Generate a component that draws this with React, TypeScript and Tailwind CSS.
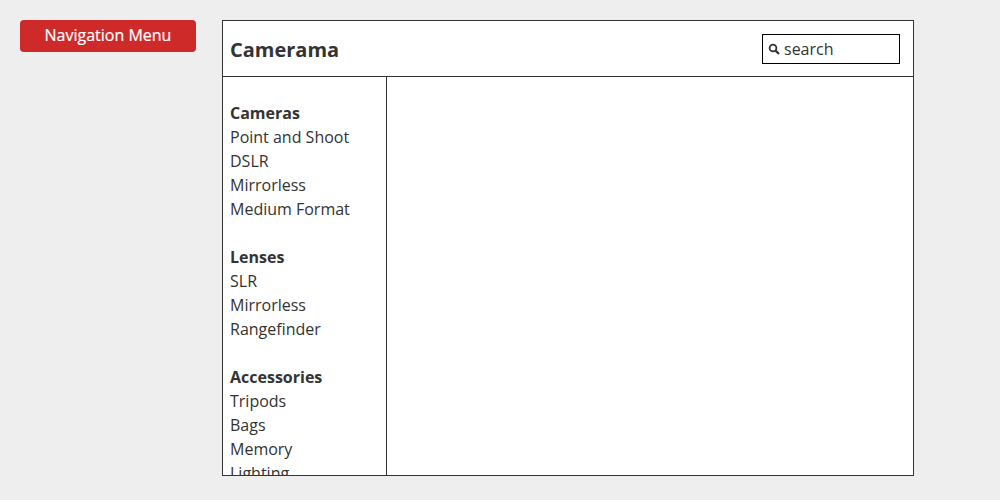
import React from "react";

const groups = [
  { title: "Cameras", items: ["Point and Shoot", "DSLR", "Mirrorless", "Medium Format"] },
  { title: "Lenses", items: ["SLR", "Mirrorless", "Rangefinder"] },
  { title: "Accessories", items: ["Tripods", "Bags", "Memory", "Lighting"] },
];

export default function App() {
  return (
    <div className="w-[1000px] h-[500px] overflow-hidden bg-[#eeeeee] flex items-start pt-5 pl-5 text-[#333333] font-['Open_Sans',sans-serif]">
      <button className="w-[176px] h-8 shrink-0 rounded-[4px] bg-[#cf2a2a] text-white text-base leading-[30px] pb-0.5 font-normal [-webkit-text-stroke:0.2px_white]">
        Navigation Menu
      </button>
      <div className="ml-[26px] w-[692px] h-[456px] shrink-0 border border-[#333333] bg-white flex flex-col">
        <header className="h-[56px] shrink-0 border-b border-[#333333] flex items-center justify-between pl-[7px] pr-[13px]">
          <h1 className="text-[20px] font-bold leading-none pt-[3px]">Camerama</h1>
          <div className="w-[138px] h-[30px] border border-black flex items-center pl-[5px] gap-1 text-base">
            <svg width="12" height="12" viewBox="0 0 12 12" fill="none" stroke="#333333" className="shrink-0">
              <circle cx="5" cy="5" r="3.4" strokeWidth="1.8" />
              <path d="M7.6 7.6 L11 11" strokeWidth="2.2" />
            </svg>
            <span className="leading-none">search</span>
          </div>
        </header>
        <div className="flex-1 min-h-0 flex">
          <nav className="w-[164px] shrink-0 border-r border-[#333333] overflow-hidden pl-[7px] pt-6 text-base leading-6">
            {groups.map((g) => (
              <div key={g.title} className="mb-6">
                <div className="font-bold">{g.title}</div>
                {g.items.map((i) => (
                  <div key={i}>{i}</div>
                ))}
              </div>
            ))}
          </nav>
          <main className="flex-1" />
        </div>
      </div>
    </div>
  );
}
